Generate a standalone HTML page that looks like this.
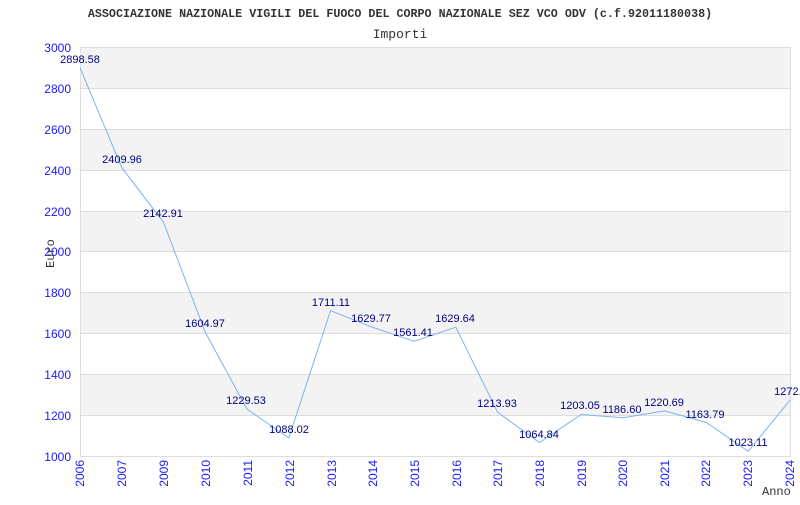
<!DOCTYPE html>
<html><head><meta charset="utf-8"><style>body{margin:0;background:#fff}</style></head><body>
<svg width="800" height="500" xmlns="http://www.w3.org/2000/svg" font-family="Liberation Sans, sans-serif">
<rect width="800" height="500" fill="#fff"/>
<text x="400" y="17" text-anchor="middle" font-family="Liberation Mono, monospace" font-weight="bold" font-size="11.7" fill="#333">ASSOCIAZIONE NAZIONALE VIGILI DEL FUOCO DEL CORPO NAZIONALE SEZ VCO ODV (c.f.92011180038)</text>
<text x="400" y="38" text-anchor="middle" font-family="Liberation Mono, monospace" font-size="13" fill="#333">Importi</text>
<g fill="#f3f3f3">
<rect x="80" y="47" width="710" height="41"/><rect x="80" y="129" width="710" height="41"/><rect x="80" y="211" width="710" height="40"/><rect x="80" y="292" width="710" height="41"/><rect x="80" y="374" width="710" height="41"/>
</g>
<g stroke="#ddd" stroke-width="1">
<line x1="80" y1="47.5" x2="790" y2="47.5"/><line x1="80" y1="88.5" x2="790" y2="88.5"/><line x1="80" y1="129.5" x2="790" y2="129.5"/><line x1="80" y1="170.5" x2="790" y2="170.5"/><line x1="80" y1="211.5" x2="790" y2="211.5"/><line x1="80" y1="251.5" x2="790" y2="251.5"/><line x1="80" y1="292.5" x2="790" y2="292.5"/><line x1="80" y1="333.5" x2="790" y2="333.5"/><line x1="80" y1="374.5" x2="790" y2="374.5"/><line x1="80" y1="415.5" x2="790" y2="415.5"/><line x1="80" y1="456.5" x2="790" y2="456.5"/>
<line x1="80.5" y1="47" x2="80.5" y2="457"/><line x1="790.5" y1="47" x2="790.5" y2="457"/>
</g>
<g fill="#1a1aff" font-size="12" text-anchor="end">
<text x="71" y="52">3000</text><text x="71" y="93">2800</text><text x="71" y="134">2600</text><text x="71" y="175">2400</text><text x="71" y="216">2200</text><text x="71" y="256">2000</text><text x="71" y="297">1800</text><text x="71" y="338">1600</text><text x="71" y="379">1400</text><text x="71" y="420">1200</text><text x="71" y="461">1000</text>
</g>
<g fill="#1a1aff" font-size="12" text-anchor="end">
<text transform="translate(84,460) rotate(-90)">2006</text>
<text transform="translate(126,460) rotate(-90)">2007</text>
<text transform="translate(168,460) rotate(-90)">2009</text>
<text transform="translate(210,460) rotate(-90)">2010</text>
<text transform="translate(252,460) rotate(-90)">2011</text>
<text transform="translate(294,460) rotate(-90)">2012</text>
<text transform="translate(336,460) rotate(-90)">2013</text>
<text transform="translate(377,460) rotate(-90)">2014</text>
<text transform="translate(419,460) rotate(-90)">2015</text>
<text transform="translate(461,460) rotate(-90)">2016</text>
<text transform="translate(502,460) rotate(-90)">2017</text>
<text transform="translate(544,460) rotate(-90)">2018</text>
<text transform="translate(586,460) rotate(-90)">2019</text>
<text transform="translate(627,460) rotate(-90)">2020</text>
<text transform="translate(669,460) rotate(-90)">2021</text>
<text transform="translate(710,460) rotate(-90)">2022</text>
<text transform="translate(752,460) rotate(-90)">2023</text>
<text transform="translate(794,460) rotate(-90)">2024</text>
</g>
<text transform="translate(54,268) rotate(-90)" font-family="Liberation Mono, monospace" font-size="12" fill="#333">Euro</text>
<text x="762" y="495" font-family="Liberation Mono, monospace" font-size="12" fill="#333">Anno</text>
<polyline fill="none" stroke="#7ab4f0" stroke-width="1" points="80,67.7 121.8,167.7 163.5,222.3 205.3,332.3 247,409.1 288.8,438 330.6,310.6 372.3,327.2 414.1,341.2 455.8,327.2 497.6,412.2 539.4,442.7 581.1,414.5 622.9,417.8 664.6,410.9 706.4,422.5 748.2,451.3 790,400.2"/>
<g fill="#000080" font-size="11" text-anchor="middle">
<text x="80" y="63">2898.58</text><text x="122" y="163">2409.96</text><text x="163" y="217">2142.91</text><text x="205" y="327">1604.97</text><text x="246" y="404">1229.53</text><text x="289" y="433">1088.02</text><text x="331" y="306">1711.11</text><text x="371" y="322">1629.77</text><text x="413" y="336">1561.41</text><text x="455" y="322">1629.64</text><text x="497" y="407">1213.93</text><text x="539" y="438">1064.84</text><text x="580" y="409">1203.05</text><text x="622" y="413">1186.60</text><text x="664" y="406">1220.69</text><text x="705" y="418">1163.79</text><text x="748" y="446">1023.11</text><text x="791" y="395">1272.9</text>
</g>
</svg>
</body></html>
